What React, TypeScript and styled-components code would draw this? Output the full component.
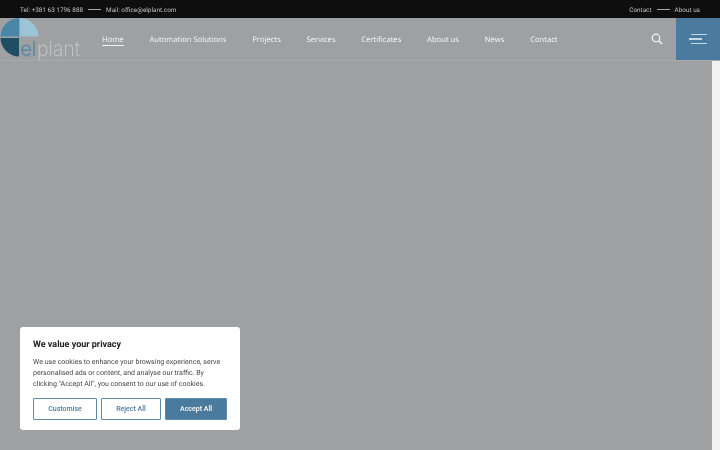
import React from "react";
import styled, { createGlobalStyle } from "styled-components";

const GlobalStyle = createGlobalStyle`
  html, body {
    margin: 0;
    padding: 0;
    height: 100%;
    overflow: hidden;
    background: #9fa0a2;
  }
  * {
    box-sizing: border-box;
  }
`;

const Page = styled.div`
  width: 720px;
  height: 450px;
  display: flex;
  flex-direction: column;
  background: #9fa0a2;
  overflow: hidden;
  text-rendering: geometricPrecision;
  filter: blur(0.25px);
`;

const TopBar = styled.div`
  height: 18px;
  background: #0e0e0e;
  display: flex;
  align-items: center;
  justify-content: space-between;
  padding: 1px 20px 0;
  font-family: Roboto, "Liberation Sans", sans-serif;
  font-size: 6.4px;
  color: #c0c0c0;
`;

const TopGroup = styled.div`
  display: flex;
  align-items: center;
  gap: 5px;
`;

const TopDash = styled.span`
  width: 13px;
  height: 1px;
  background: #a8a8a8;
`;

const Header = styled.header`
  height: 43px;
  display: flex;
  align-items: center;
  border-bottom: 1px solid #a9aaac;
`;

const LogoBox = styled.div`
  width: 102px;
  height: 42px;
  flex-shrink: 0;
`;

const Nav = styled.nav`
  display: flex;
  align-items: center;
  gap: 25.8px;
  flex: 1;
  padding-top: 2px;
  font-family: "Open Sans", Lato, sans-serif;
  font-size: 7.65px;
  font-weight: 500;
  color: #f8f8f8;
`;

const NavLink = styled.a<{ $active?: boolean }>`
  display: block;
  border-bottom: 1px solid ${(props) => (props.$active ? "#f0f0f0" : "transparent")};
  white-space: nowrap;
`;

const SearchButton = styled.div`
  width: 12px;
  height: 12px;
  margin-right: 13px;
  display: flex;
`;

const MenuButton = styled.div`
  width: 44px;
  height: 42px;
  background: #4a7a9e;
  display: flex;
  flex-direction: column;
  align-items: flex-start;
  justify-content: center;
  gap: 3px;
  padding-left: 13px;
`;

const MenuBar = styled.span<{ $width: number; $offset: number }>`
  display: block;
  height: 1.4px;
  width: ${(props) => props.$width}px;
  margin-left: ${(props) => props.$offset}px;
  background: #c4d8e6;
`;

const Body = styled.div`
  flex: 1;
  display: flex;
`;

const Hero = styled.main`
  flex: 1;
`;

const ScrollTrack = styled.div`
  width: 8px;
  background: #f1f1f2;
`;

const CookieCard = styled.section`
  position: fixed;
  left: 20px;
  top: 327px;
  width: 220px;
  height: 103px;
  background: #fff;
  border-radius: 3px;
  padding: 11.5px 13px 0;
  font-family: Roboto, "Liberation Sans", sans-serif;
`;

const CookieTitle = styled.h2`
  margin: 0;
  font-size: 9px;
  font-weight: 700;
  line-height: 12px;
  color: #212121;
`;

const CookieText = styled.p`
  margin: 5px 0 0;
  font-size: 7.05px;
  line-height: 11.2px;
  color: #484848;
`;

const CookieActions = styled.div`
  display: flex;
  justify-content: space-between;
  margin-top: 8.9px;
`;

const CookieButton = styled.button<{ $width: number; $primary?: boolean }>`
  width: ${(props) => props.$width}px;
  height: 22px;
  padding: 0;
  border: 1.2px solid #5f8aaa;
  border-radius: 1px;
  background: ${(props) => (props.$primary ? "#4a7a9e" : "#fff")};
  color: ${(props) => (props.$primary ? "#fff" : "#4a7a9e")};
  font-family: Roboto, "Liberation Sans", sans-serif;
  font-size: 7px;
  font-weight: 500;
`;

const LogoText = styled.text`
  font-family: "Inter", "Open Sans", sans-serif;
  font-size: 21px;
  font-weight: 200;
`;

const LogoStrong = styled(LogoText)`
  font-weight: 400;
`;

const LogoSvg = styled.svg`
  overflow: visible;
  display: block;
`;

const Logo = () => (
  <LogoSvg width="102" height="42" viewBox="0 0 102 42">
    <path d="M19 0 A19 19 0 0 0 0.5 18.5 H19 Z" fill="#4a87a6" />
    <path d="M20 0 A19 19 0 0 1 38.5 18.5 H20 Z" fill="#9cc3d6" />
    <path d="M19 20 H0.5 A19 19 0 0 0 19 38.5 Z" fill="#1f4d63" />
    <LogoStrong x="20" y="38" fill="#5d8ca6">e</LogoStrong>
    <LogoStrong x="31.5" y="38" fill="#5d8ca6">l</LogoStrong>
    <LogoText x="37" y="38" fill="#c6c9cb" textLength={43} lengthAdjust="spacingAndGlyphs">plant</LogoText>
  </LogoSvg>
);

const SearchIcon = () => (
  <svg width="12" height="12" viewBox="0 0 12 12" fill="none" stroke="#f4f4f4">
    <circle cx="5" cy="5" r="3.8" strokeWidth="1.2" />
    <path d="M7.8 7.8 L11 11" strokeWidth="1.5" />
  </svg>
);

const navItems = [
  "Automation Solutions",
  "Projects",
  "Services",
  "Certificates",
  "About us",
  "News",
  "Contact",
];

const App = () => {
  return (
    <Page>
      <GlobalStyle />
      <TopBar>
        <TopGroup>
          <span>Tel: +381 63 1796 888</span>
          <TopDash />
          <span>Mail: office@elplant.com</span>
        </TopGroup>
        <TopGroup>
          <span>Contact</span>
          <TopDash />
          <span>About us</span>
        </TopGroup>
      </TopBar>
      <Header>
        <LogoBox>
          <Logo />
        </LogoBox>
        <Nav>
          <NavLink $active>Home</NavLink>
          {navItems.map((item) => (
            <NavLink key={item}>{item}</NavLink>
          ))}
        </Nav>
        <SearchButton>
          <SearchIcon />
        </SearchButton>
        <MenuButton>
          <MenuBar $width={16} $offset={2} />
          <MenuBar $width={13} $offset={0} />
          <MenuBar $width={16} $offset={2} />
        </MenuButton>
      </Header>
      <Body>
        <Hero />
        <ScrollTrack />
      </Body>
      <CookieCard>
        <CookieTitle>We value your privacy</CookieTitle>
        <CookieText>
          We use cookies to enhance your browsing experience, serve personalised ads or content, and analyse our traffic. By clicking "Accept All", you consent to our use of cookies.
        </CookieText>
        <CookieActions>
          <CookieButton $width={64}>Customise</CookieButton>
          <CookieButton $width={60}>Reject All</CookieButton>
          <CookieButton $width={62} $primary>Accept All</CookieButton>
        </CookieActions>
      </CookieCard>
    </Page>
  );
};

export default App;
